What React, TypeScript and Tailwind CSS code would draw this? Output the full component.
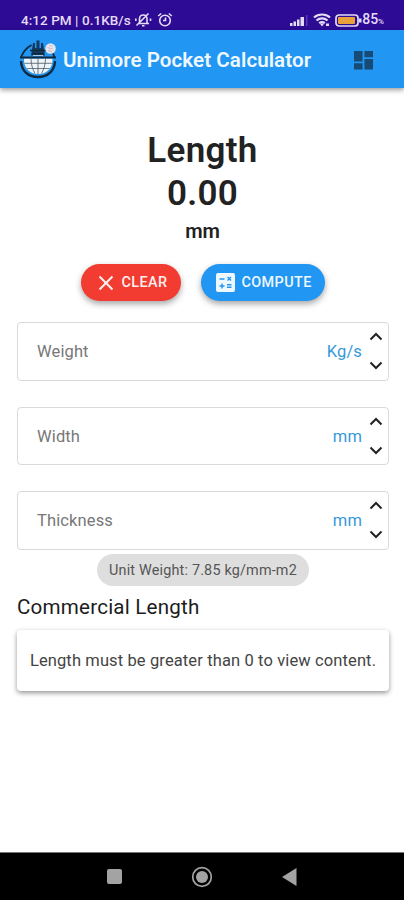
import React from "react";

interface IField {
  label: string;
  unit: string;
}

const fields: IField[] = [
  { label: "Weight", unit: "Kg/s" },
  { label: "Width", unit: "mm" },
  { label: "Thickness", unit: "mm" },
];

const StatusBar = () => (
  <div className="flex h-[30px] items-center bg-[#2d0b94] pl-[21px] pr-[21px] pt-[10px] text-[#e4dcf6]">
    <div className="text-[13.5px] font-medium leading-5 tracking-[0.05px] whitespace-nowrap">4:12 PM | 0.1KB/s</div>
    <svg className="ml-[3px] shrink-0" width="18" height="16" viewBox="0 0 18 16" fill="none" stroke="currentColor" strokeWidth="1.6">
      <path d="M4 11.5h11M5.5 11V7c0-2.4 1.5-4 3.7-4s3.8 1.6 3.8 4v4M8 13.7h2.5M2.5 13.5l12-12M1.8 9V6.5M16.5 9V6.5" />
    </svg>
    <svg className="ml-[5px] shrink-0" width="16" height="16" viewBox="0 0 16 16" fill="none" stroke="currentColor" strokeWidth="1.6">
      <circle cx="8" cy="8.5" r="5.3" />
      <path d="M6 8.5h2.5V5.5M1.2 4l3-2.5M14.8 4l-3-2.5" />
    </svg>
    <div className="flex-auto" />
    <svg className="shrink-0" width="18" height="14" viewBox="0 0 18 14" fill="currentColor">
      <path d="M0 10h2.5v3H0zM3.5 8.500H6V13H3.500zM7 6.500h2.500V13H7zM10.500 4H14v9h-3.500z" />
      <path d="M16.300 2H17.300v11h-1z" opacity=".35" />
    </svg>
    <svg className="ml-[5px] shrink-0" width="18" height="14" viewBox="0 0 18 14" fill="none" stroke="currentColor" strokeWidth="2.2">
      <path d="M1 4.500c4.500-4 11.500-4 16 0M3.500 7.500c3.200-2.800 7.800-2.800 11 0M6.200 10.200c1.600-1.300 4-1.300 5.600 0" />
      <path d="M6.800 10.500 9 13.500l2.200-3zM13 10.500h3V13h-3z" fill="currentColor" stroke="none" />
    </svg>
    <svg className="ml-[4px] shrink-0" width="27" height="13" viewBox="0 0 27 13">
      <rect x="1" y="1" width="22" height="11" rx="3" fill="none" stroke="currentColor" strokeWidth="1.7" />
      <rect x="3" y="3" width="17" height="7" rx="1" fill="#e9a13b" />
      <path d="M24 4.500h2.500v4H24z" fill="currentColor" />
    </svg>
    <div className="text-[14px] font-medium leading-5 whitespace-nowrap">
      85<span className="text-[8px] tracking-[-1px]">%</span>
    </div>
  </div>
);

const Logo = () => (
  <svg className="shrink-0" width="38" height="40" viewBox="0 0 38 40">
    <path d="M2 22c.3 9.500 7 16 17 16s16.700-6.500 17-16" fill="none" stroke="#10293f" strokeWidth="2.4" />
    <path d="M2 18.500C4 13 7.500 8.800 12.500 6M35.500 18.500c-.4-1.700-1-3-1.800-4.200" fill="none" stroke="#10293f" strokeWidth="1.8" />
    <path d="M5 19.500h28.500c.4 9.500-5.500 15.500-14.300 15.500S4.600 29 5 19.500z" fill="#eef4f8" />
    <path d="M5.500 24.300h27.400M8 29.500h22.500M19 20v15M12 20c.2 6 1.700 10.500 4 14.500M26.500 20c-.2 6-1.700 10.500-4 14.500" fill="none" stroke="#4d5b66" strokeWidth=".8" />
    <path d="M1 17.500h36v2H1z" fill="#10293f" />
    <path d="M12 16.500 14 4h2v5h1.500V1.500h3V9H22V4h2l2 12.500z" fill="#123a61" />
    <path d="M11 11.500h16M13 14.800h12" stroke="#10293f" strokeWidth="1.5" />
    <path d="M14 16.500h10" stroke="#a9cde9" strokeWidth="1" />
    <circle cx="31.500" cy="9.500" r="5.3" fill="#e3e6ee" />
    <path d="M28.500 8.500l5 1.500M30.500 6.500l3 .8M29 11.500l4 1" stroke="#d3a5ae" strokeWidth=".8" />
  </svg>
);

const AppHeader = () => (
  <div className="flex h-[58px] items-center bg-[#2196f3] pl-[19px] pr-[31px] shadow-[0_2px_5px_rgba(0,0,0,0.4)]">
    <Logo />
    <div className="ml-1.5 mt-px flex-auto text-[20.6px] font-semibold leading-7 tracking-[0.05px] text-[#eef8ff] whitespace-nowrap">
      Unimore Pocket Calculator
    </div>
    <svg className="mt-[3px] shrink-0" width="19" height="19" viewBox="0 0 20 20" fill="#174a75">
      <path d="M0 0h9v11H0zM11 0h9v6.500h-9zM0 13h9v6.500H0zM11 8.500h9v11h-9z" />
    </svg>
  </div>
);

const Field = ({ label, unit }: IField) => (
  <div className="flex h-[58.5px] items-center rounded-[4px] border border-[#dadada] pl-[19px] pr-[5px]">
    <div className="mt-[3px] flex-auto text-[16.5px] tracking-[0.12px] text-[#777]">{label}</div>
    <div className="mt-[3px] text-[16.5px] tracking-[0.12px] text-[#3598d9]">{unit}</div>
    <svg className="ml-[7px] shrink-0" width="14" height="42" viewBox="0 0 14 42" fill="none" stroke="#222" strokeWidth="2">
      <path d="M1.500 9.500 7 4l5.500 5.500M1.500 32.500 7 38l5.500-5.500" />
    </svg>
  </div>
);

const App = () => {
  return (
    <div className="flex h-[900px] w-[404px] flex-col overflow-hidden bg-white font-[Roboto,sans-serif]">
      <StatusBar />
      <AppHeader />
      <div className="flex flex-auto flex-col pl-[17px] pr-[15px] pt-[41px]">
        <div className="pr-px text-center font-semibold text-[#222]">
          <div className="text-[35px] leading-[43px] tracking-[0.3px]">Length</div>
          <div className="text-[35px] leading-[43px] tracking-[0.3px]">0.00</div>
          <div className="text-[20px] leading-[33px]">mm</div>
        </div>
        <div className="mt-4 flex justify-center gap-5 pr-px">
          <button
            type="button"
            className="flex h-[37px] w-[100px] items-center rounded-full bg-[#f23c32] pl-[17px] text-[14.4px] font-medium tracking-[0.4px] text-[#fff0ee] shadow-[0_3px_6px_rgba(0,0,0,0.35)]"
          >
            <svg className="mr-[8px] shrink-0" width="16" height="16" viewBox="0 0 16 16" stroke="currentColor" strokeWidth="2">
              <path d="m1.500 1.500 13 13M14.500 1.500l-13 13" />
            </svg>
            CLEAR
          </button>
          <button
            type="button"
            className="flex h-[37px] w-[124px] items-center rounded-full bg-[#2196f3] pl-[15px] text-[14.4px] font-medium tracking-[0.4px] text-[#eef8ff] shadow-[0_3px_6px_rgba(0,0,0,0.35)]"
          >
            <svg className="mr-[7px] shrink-0" width="19" height="19" viewBox="0 0 19 19">
              <rect width="19" height="19" rx="2" fill="currentColor" />
              <path d="M3.500 6h5M11.500 4l3.500 3.500M15 4l-3.500 3.500M3.500 13h5M6 10.500v5M11 11.700h4.500M11 14.300h4.500" stroke="#2196f3" strokeWidth="1.4" />
            </svg>
            COMPUTE
          </button>
        </div>
        <div className="mt-[21px] flex flex-col gap-[26px]">
          {fields.map((field, index) => (
            <Field key={index} label={field.label} unit={field.unit} />
          ))}
        </div>
        <div className="mt-[4.5px] flex h-8 w-[212px] items-center justify-center self-center rounded-full bg-[#dedede] pt-px text-[14.4px] tracking-[0.18px] text-[#555] whitespace-nowrap">
          Unit Weight: 7.85 kg/mm-m2
        </div>
        <div className="mt-[7px] text-[20.6px] leading-7 tracking-[0.2px] text-[#1c1c1c]">Commercial Length</div>
        <div className="mt-[9px] flex h-[61px] items-center justify-center rounded-[4px] bg-white pt-px text-[16.5px] tracking-[0.12px] text-[#444] whitespace-nowrap shadow-[0_2px_5px_rgba(0,0,0,0.42)]">
          Length must be greater than 0 to view content.
        </div>
      </div>
      <div className="flex h-[48px] shrink-0 items-center border-t border-[#777] bg-black pl-[107px]">
        <div className="h-[15px] w-[15px] rounded-[2px] bg-[#a3a3a3]" />
        <svg className="ml-[69px]" width="22" height="22" viewBox="0 0 22 22">
          <circle cx="11" cy="11" r="9.3" fill="none" stroke="#a3a3a3" strokeWidth="1.7" />
          <circle cx="11" cy="11" r="6" fill="#a3a3a3" />
        </svg>
        <svg className="ml-[69px]" width="15" height="18" viewBox="0 0 15 18" fill="#a3a3a3">
          <path d="M0 9 14.500 0v18z" />
        </svg>
      </div>
    </div>
  );
};

export default App;
